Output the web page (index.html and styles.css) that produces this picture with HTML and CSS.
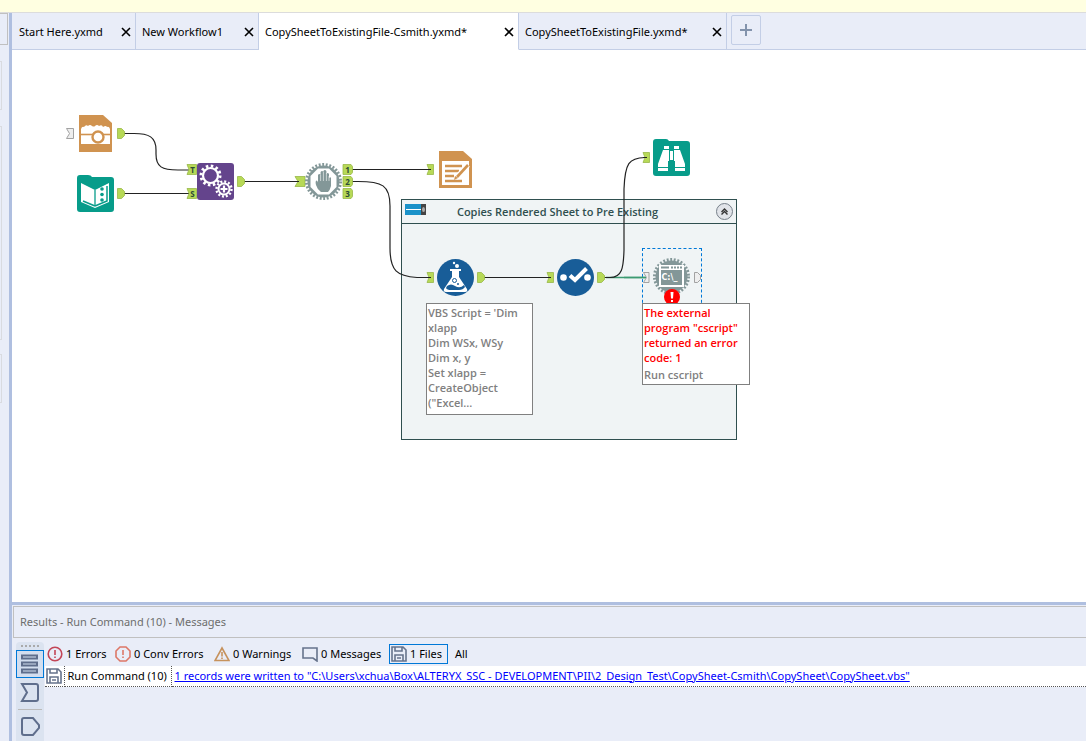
FILE: index.html
```html
<!DOCTYPE html>
<html lang="en">
<head>
<meta charset="utf-8">
<meta name="viewport" content="width=device-width, initial-scale=1">
<title>Workflow Designer</title>
<link rel="stylesheet" href="styles.css">
</head>
<body>
<div class="notice"></div>
<div class="shell">
  <aside class="rail">
    <div class="rail-box rail-first"></div>
    <div class="rail-box rail-short"></div>
    <div class="rail-box rail-tall"></div>
    <div class="rail-box rail-short"></div>
  </aside>
  <main class="main">
    <nav class="tabs">
      <div class="tab tab-a"><button class="tab-name">Start Here.yxmd</button><button class="close" aria-label="Close"><svg viewBox="0 0 10 10"><path d="M1 1l8 8M9 1L1 9"/></svg></button></div>
      <div class="tab tab-b"><button class="tab-name">New Workflow1</button><button class="close" aria-label="Close"><svg viewBox="0 0 10 10"><path d="M1 1l8 8M9 1L1 9"/></svg></button></div>
      <div class="tab tab-c active"><button class="tab-name">CopySheetToExistingFile-Csmith.yxmd*</button><button class="close" aria-label="Close"><svg viewBox="0 0 10 10"><path d="M1 1l8 8M9 1L1 9"/></svg></button></div>
      <div class="tab tab-d"><button class="tab-name">CopySheetToExistingFile.yxmd*</button><button class="close" aria-label="Close"><svg viewBox="0 0 10 10"><path d="M1 1l8 8M9 1L1 9"/></svg></button></div>
      <div class="tab-rest"><button class="add" aria-label="New tab"><svg viewBox="0 0 14 14"><path d="M7 1v12M1 7h12"/></svg></button></div>
    </nav>

    <section class="canvas">
      <section class="group">
        <header class="group-head">
          <svg class="toggle" viewBox="0 0 22 11"><path fill="#1b92c9" d="M0 0h16v11H0z"/><path fill="#fff" d="M1 5h15v1H1z"/><path fill="#444" d="M16 0h5v11h-5z"/><ellipse cx="18.500" cy="5.500" rx="1.500" ry="2.500" fill="#aaa"/></svg>
          <h2 class="group-title">Copies Rendered Sheet to Pre Existing</h2>
          <button class="collapse" aria-label="Collapse"><svg viewBox="0 0 15 15"><path d="M4.500 8l3-3 3 3M4.500 10.500l3-3 3 3" fill="none" stroke="#333" stroke-width="1.400"/></svg></button>
        </header>
      </section>
      <div class="selection"></div>

      <svg class="wires" viewBox="12 50 760 400">
        <g fill="none" stroke="#222" stroke-width="1.200">
          <path d="M123 133.500H134C149 133.500 156 137 156 150V154C156 167 162 170 178 170H190"/>
          <path d="M123 193.500H191M243 181.500H298M351 169.500H430M484 277.500H550"/>
          <path d="M351 181.500H358C382 181.500 390 185 390 206V248C390 271 397 276 417 277.500H430"/>
          <path stroke="#3c9b72" stroke-width="1.500" d="M606 277.500H645"/>
          <path d="M603 277.500H610C622 277.500 623.500 268 624 250V189C625 163 629 158 645 157.500"/>
        </g>
        <g fill="#b7d957" stroke="#98b848" stroke-width=".8">
          <path d="M117.500 128.500h4l3 3v4l-3 3h-4z"/>
          <path d="M117.500 188.500h4l3 3v4l-3 3h-4z"/>
          <path d="M237.500 176.500h4l3 3v4l-3 3h-4z"/>
          <path d="M477.500 272.500h4l3 3v4l-3 3h-4z"/>
          <path d="M597.500 272.500h4l3 3v4l-3 3h-4z"/>
          <path d="M187 164.500h9.500v10H187l2-5zM187 188.500h9.500v10H187l2-5z"/>
          <path d="M295 176.500h10v10h-10l3-5zM427 164.500h6.500v10H427l2-5zM427 272.500h6.500v10H427l2-5zM547 272.500h6.500v10H547l2-5zM643 152.500h6.500v10H643l2-5z"/>
          <path d="M343 164.500h8l1.500 2v6l-1.500 2h-8zM343 176.500h8l1.500 2v6l-1.500 2h-8zM343 188.500h8l1.500 2v6l-1.500 2h-8z"/>
        </g>
        <g fill="#eee" stroke="#999" stroke-width=".9">
          <path d="M66.500 128.500h7v10h-7l3-5zM643.500 272.500h5.500v10h-5.500l3-5zM694.500 272.500h3l3 3v4l-3 3h-3z"/>
        </g>
        <path stroke="#3c9b72" stroke-width="1.500" d="M624 277.500h22"/>
        <path stroke="#222" stroke-width="1.200" d="M427 277.500h4M427 169.500h4M547 277.500h4M643 157.500h4M295 181.500h4"/>
        <g class="anchor-text"><text x="192.500" y="173">T</text><text x="192.500" y="197">S</text><text x="347.500" y="173">1</text><text x="347.500" y="185">2</text><text x="347.500" y="197">3</text></g>
      </svg>

      <button class="node camera" aria-label="Render input"><svg viewBox="0 0 37 37"><path fill="#d09350" d="M2 0h24l9 8v29H2z"/><path fill="#fff" d="M4 14q1-3 3-2 2-3 4-1 2-2 4 0 2 1 3 0 2-2 4 0 3-2 4 1 3-2 4 0 2-1 3 2v15H4z"/><path stroke="#d09350" stroke-width="1.600" d="M4 19.500h29"/><circle cx="21" cy="22" r="5.500" fill="#fff" stroke="#d09350" stroke-width="2.400"/></svg></button>
      <button class="node book" aria-label="Data input"><svg viewBox="0 0 37 37"><path fill="#079c8a" d="M0 3q0-3 3-3h8q3 0 4 2h19q3 0 3 3v29q0 3-3 3H3q-3 0-3-3z"/><path fill="#fff" d="M4 8l14 7 14-7v19L18 33 4 27z"/><path stroke="#079c8a" stroke-width="1.300" d="M18 15v15"/><path stroke="#079c8a" stroke-width="1.500" fill="none" d="M18 31l12-5V11M18 31L6 26"/><g fill="#079c8a"><circle cx="25" cy="14" r="1.800"/><circle cx="25" cy="19.500" r="1.800"/><circle cx="25" cy="25" r="1.800"/></g></svg></button>
      <button class="node gears" aria-label="Macro"><svg viewBox="0 0 37 37"><rect width="37" height="37" rx="3" fill="#64448c"/><g fill="none" stroke="#fff"><circle cx="13.500" cy="12.500" r="7.500" stroke-width="2.200"/><circle cx="13.500" cy="12.500" r="9.500" stroke-width="3" stroke-dasharray="2.500 2.473"/><circle cx="27" cy="26" r="5.500" stroke-width="2"/><circle cx="27" cy="26" r="7.500" stroke-width="2.400" stroke-dasharray="2 1.927"/><path stroke-width="2.200" d="M27 22.500v7M23.500 26h7"/></g></svg></button>
      <button class="node hand" aria-label="Block until done"><svg viewBox="0 0 37 37"><circle cx="18.500" cy="18.500" r="16" fill="#839798"/><circle cx="18.500" cy="18.500" r="17" fill="none" stroke="#839798" stroke-width="3" stroke-dasharray="1.900 1.660"/><path fill="#fff" d="M13 5.500h11l7.500 7.500v11L24 31.500H13L5.500 24V13z"/><path fill="#839798" d="M13 20V12q1.300-1.800 2.600 0V9q1.400-2 2.800 0V8q1.500-2 3 0v3q1.400-2 2.600 0v4q1.500-1.500 2 0v8q-1 4-3 6h-7q-4-3-5-7-1-4 .5-4.500 1 0 1.500 2z"/><path stroke="#fff" stroke-width=".6" d="M15.600 12v6M18.400 9v9M21.400 10v8M24 13v5"/></svg></button>
      <button class="node report" aria-label="Report text"><svg viewBox="0 0 37 37"><path fill="#d09350" d="M2 0h24l9 8v29H2z"/><path fill="#fff" d="M5 10h27v24H5z"/><path stroke="#d09350" stroke-width="2.400" d="M8 15h17M8 20h14M8 25h9M8 30h17"/><path stroke="#fff" stroke-width="5" d="M19 27L31 14"/><path stroke="#d09350" stroke-width="2.600" d="M20 26L31 14"/><path fill="#d09350" d="M17 29l1-4 3 2z"/></svg></button>
      <button class="node binoculars" aria-label="Browse"><svg viewBox="0 0 37 37"><path fill="#079c8a" d="M0 3q0-3 3-3h10q2 0 3 2h18q3 0 3 3v29q0 3-3 3H3q-3 0-3-3z"/><path fill="#fff" d="M11 7h5v3h-5zM21 7h5v3h-5zM10 11h6v11h-1v10H5v-7zM21 11h6l5 14v7H22V22h-1zM17 12h3v9h-3z"/><path stroke="#079c8a" d="M5 28.500h10M22 28.500h10"/></svg></button>
      <button class="node flask" aria-label="Formula"><svg viewBox="0 0 37 37"><circle cx="18.500" cy="18.500" r="18.500" fill="#185d98"/><g fill="#fff"><circle cx="17" cy="4" r="1.200"/><circle cx="20" cy="7" r="2"/><path d="M13 10h11v2h-2v6l8 12q1 3-2 3H9q-3 0-2-3l8-12v-6h-2z"/></g><path fill="#185d98" d="M10 27q4-3 8 0 5 3 9-1l1 2q-2 3-6 3h-8q-4 0-5-2z"/><circle cx="17.500" cy="21.500" r="2" fill="none" stroke="#185d98"/><circle cx="21" cy="25" r="1" fill="#185d98"/></svg></button>
      <button class="node check" aria-label="Select"><svg viewBox="0 0 37 37"><circle cx="18.500" cy="18.500" r="18.500" fill="#185d98"/><circle cx="6.500" cy="18.500" r="3.300" fill="#fff"/><circle cx="30.500" cy="18.500" r="3.300" fill="#fff"/><path fill="none" stroke="#fff" stroke-width="4" d="M13 16.500l5 4.500L29.500 9.500"/></svg></button>
      <button class="node command" aria-label="Run command"><svg viewBox="0 0 37 37"><circle cx="18.500" cy="18.500" r="16" fill="#839798"/><circle cx="18.500" cy="18.500" r="17" fill="none" stroke="#839798" stroke-width="3" stroke-dasharray="1.900 1.660"/><path fill="#fff" d="M6 7h25v22H6z"/><path fill="#839798" d="M8 12h21v15H8zM8 8.500h8v2H8z"/><path stroke="#839798" stroke-width="2" stroke-dasharray="2 1" d="M18 9.500h11"/><text class="prompt" x="8.500" y="22">C:\_</text></svg></button>
      <svg class="alert" viewBox="0 0 16 16"><circle cx="8" cy="8" r="8" fill="#f00"/><path fill="#fff" d="M6.500 3h3L9 9.500H7zM7 11h2v2H7z"/></svg>

      <p class="note note-script">VBS Script = 'Dim xlapp<br>Dim WSx, WSy<br>Dim x, y<br>Set xlapp = CreateObject<br>("Excel...</p>
      <div class="note note-error"><p class="error">The external program "cscript" returned an error code: 1</p><p>Run cscript</p></div>
    </section>

    <section class="results">
      <h2 class="results-title">Results - Run Command (10) - Messages</h2>
      <div class="results-body">
        <div class="strip">
          <div class="grip"></div>
          <button class="strip-button selected" aria-label="Messages"><svg viewBox="0 0 20 22"><path d="M2 2.500h15v3H2zM2 9.500h15v3H2zM2 16.500h15v3H2z"/></svg></button>
          <button class="strip-button" aria-label="Input"><svg viewBox="0 0 20 22"><path d="M2 3h14q2 0 2 2v13q0 2-2 2H2l5-8.500z"/></svg></button>
          <hr class="strip-rule">
          <button class="strip-button" aria-label="Output"><svg viewBox="0 0 20 22"><path d="M4 2h9l6 7v3l-6 7H4q-2 0-2-2V4q0-2 2-2z"/></svg></button>
        </div>
        <div class="log">
          <div class="filters">
            <button class="filter f-errors"><svg viewBox="0 0 16 16"><circle cx="8" cy="8" r="6.800" stroke="#c34557"/><path stroke="#c34557" d="M8 4v5M8 10.500v1.500"/></svg>1 Errors</button>
            <button class="filter f-conv"><svg viewBox="0 0 16 16"><path stroke="#dd7767" d="M5 1h6l4 4v6l-4 4H5l-4-4V5zM8 4v5M8 10.500v1.500"/></svg>0 Conv Errors</button>
            <button class="filter f-warn"><svg viewBox="0 0 16 16"><path stroke="#c6925d" d="M8 2l7 12.500H1zM8 6v4.500M8 11.500v1.500"/></svg>0 Warnings</button>
            <button class="filter f-msg"><svg viewBox="0 0 16 16"><path stroke="#66738c" d="M1 2h14v13l-4-3H1z"/></svg>0 Messages</button>
            <button class="filter f-files pressed"><svg viewBox="0 0 16 16"><path stroke="#66738c" d="M1 1h11l3 3v11H1zM4 1v4h7V1M4 15V9h8v6M6 12h4"/></svg>1 Files</button>
            <button class="filter">All</button>
          </div>
          <table class="rows"><tbody><tr>
            <td class="cell-icon"><svg viewBox="0 0 16 16"><path stroke="#66738c" d="M1 1h11l3 3v11H1zM4 1v4h7V1M4 15V9h8v6M6 12h4"/></svg></td>
            <td class="cell-tool">Run Command (10)</td>
            <td class="cell-text"><a href="#file">1 records were written to "C:\Users\xchua\Box\ALTERYX_SSC - DEVELOPMENT\PII\2_Design_Test\CopySheet-Csmith\CopySheet\CopySheet.vbs"</a></td>
          </tr></tbody></table>
        </div>
      </div>
    </section>
  </main>
</div>
</body>
</html>
```
FILE: styles.css
```css
* { box-sizing: border-box; }
body {
  margin: 0;
  height: 100vh;
  display: flex;
  flex-direction: column;
  overflow: hidden;
  background: #e9edf8;
  color: #000;
  font: 12px/16px "Noto Sans", sans-serif;
}
h2, p { margin: 0; font-weight: inherit; font-size: inherit; }
button { margin: 0; padding: 0; border: 0; background: none; color: inherit; font: inherit; }
svg { display: block; }
.notice { height: 13px; flex: none; background: #ffffe1; border-bottom: 1px solid #dcdcdc; }
.shell { flex: 1; display: flex; min-height: 0; }
.rail { width: 12px; flex: none; border-right: 3px solid #afbfe0; display: flex; flex-direction: column; gap: 16px; }
.rail-box { border: 1px solid #d9dbe0; border-left: 0; width: 2px; }
.rail-first { width: 8px; height: 32px; border-color: #c0c0c0; }
.rail-short { height: 49px; }
.rail-tall { height: 214px; }
.rail .rail-short:last-child { margin-top: -2px; }
.main { flex: 1; min-width: 0; display: flex; flex-direction: column; }

.tabs { display: flex; flex: none; height: 37px; }
.tab { display: flex; align-items: center; justify-content: space-between; padding: 2px 4px 0 7px; border-right: 1px solid #c3cee6; border-bottom: 1px solid #c3cee6; white-space: nowrap; font-size: 11px; }
.tab-a { width: 124px; }
.tab-b { width: 123px; padding-left: 6px; }
.tab-c { width: 260px; padding-left: 6px; }
.tab-d { width: 208px; padding-left: 6px; }
.tab.active { background: #fff; border-bottom-color: #fff; }
.close svg { width: 10px; height: 10px; stroke: #000; stroke-width: 1.6; }
.tab-rest { flex: 1; padding: 2px 4px; border-bottom: 1px solid #c3cee6; }
.add { width: 30px; height: 30px; border: 1px solid #c3cee6; border-radius: 2px; display: grid; place-items: center; }
.add svg { width: 14px; height: 14px; stroke: #8393ac; stroke-width: 2; }

.canvas { position: relative; flex: 1; min-height: 0; background: #fff; overflow: hidden; font: 600 11px/15px "Open Sans", "Noto Sans", sans-serif; }
.group { position: absolute; left: 389px; top: 149px; width: 336px; height: 241px; background: #f0f4f5; border: 1px solid #2f4f4f; }
.group-head { display: flex; align-items: center; height: 24px; padding: 0 3px; border-bottom: 1px solid #2f4f4f; color: #2f4f4f; }
.group-title { flex: 1; padding-right: 28px; text-align: center; }
.toggle { width: 22px; height: 11px; margin-bottom: 4px; }
.collapse { width: 17px; height: 17px; border: 1px solid #77808a; border-radius: 50%; background: #e1e4e9; }
.selection { position: absolute; left: 630px; top: 198px; width: 60px; height: 60px; border: 1px dashed #0078d7; }
.wires { position: absolute; left: 0; top: 0; width: 760px; height: 400px; }
.anchor-text { font-size: 8px; font-weight: 700; fill: #2c4a36; text-anchor: middle; }
.node, .node svg { width: 37px; height: 37px; }
.node { position: absolute; }
.camera { left: 65px; top: 65px; }
.book { left: 65px; top: 125px; }
.gears { left: 185px; top: 113px; }
.hand { left: 293px; top: 113px; }
.report { left: 425px; top: 101px; }
.binoculars { left: 641px; top: 89px; }
.flask { left: 425px; top: 209px; }
.check { left: 545px; top: 209px; }
.command { left: 641px; top: 208px; }
.prompt { font: 700 8px "DejaVu Sans", sans-serif; fill: #fff; }
.alert { position: absolute; left: 652px; top: 239px; width: 16px; height: 16px; }
.note { position: absolute; border: 1px solid #808080; background: #fff; color: #808080; padding: 1px; }
.note-script { left: 414px; top: 253px; width: 107px; height: 112px; }
.note-error { left: 630px; top: 253px; width: 108px; height: 82px; }
.error { color: #f00; margin-bottom: 2px; }

.results { flex: none; height: 139px; border-top: 3px solid #afbfe0; display: flex; flex-direction: column; }
.results-title { flex: none; height: 32px; margin: 1px 0 0 1px; padding: 7px 6px; border: 1px solid #c0c0c0; border-right: 0; color: #6d6d6d; font-size: 11px; }
.results-body { flex: 1; display: flex; padding: 4px 0 0 4px; }
.strip { width: 28px; background: #dbe3f0; border-radius: 4px 4px 0 0; }
.grip { height: 8px; margin: 0 4px; background: radial-gradient(circle, #aaa 1px, transparent 1px) 0 2px / 4px 4px repeat-x; }
.strip-button { width: 28px; height: 28px; display: grid; place-items: center; border: 1px solid transparent; }
.strip-button svg { width: 20px; height: 22px; fill: none; stroke: #5f6e8c; stroke-width: 2; }
.selected { border-color: #0078d7; background: #d3deef; }
.strip-rule { margin: 3px 2px; border: 0; height: 1px; background: #bbb; }
.log { flex: 1; min-width: 0; margin-left: 1px; }
.filters { display: flex; height: 24px; padding: 2px 0 2px 2px; align-items: center; white-space: nowrap; font-size: 11px; }
.filter { display: flex; align-items: center; gap: 3px; height: 20px; }
.filter svg, .cell-icon svg { width: 16px; height: 16px; fill: none; stroke-width: 1.6; }
.f-errors { width: 68px; }
.f-conv { width: 99px; }
.f-warn { width: 88px; }
.f-msg { width: 87px; }
.f-files { width: 59px; margin-right: 7px; }
.pressed { border: 1px solid #0078d7; padding-left: 1px; }
.rows { width: 100%; border-collapse: collapse; background: #fff; table-layout: fixed; font-size: 11px; white-space: nowrap; }
.rows td { height: 20px; padding: 0 3px; border-bottom: 1px dotted #555; border-right: 1px dotted #555; }
.rows .cell-icon { width: 19px; padding: 0 1px; }
.cell-tool { width: 107px; }
.rows .cell-text { border-right: 0; }
.cell-text a { color: #00f; }
```
